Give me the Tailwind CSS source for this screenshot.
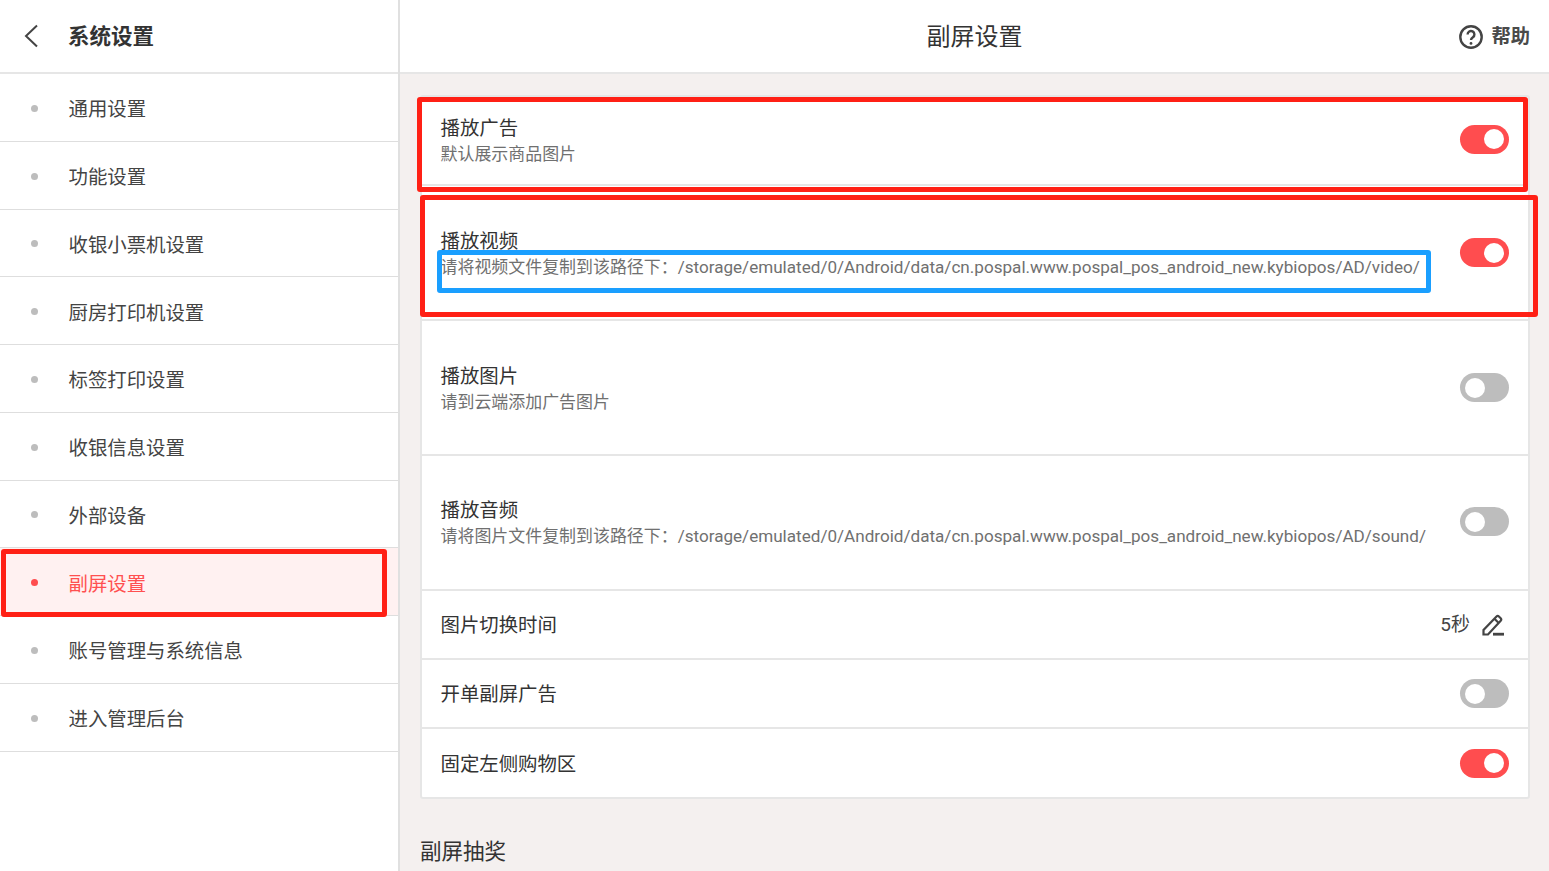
<!DOCTYPE html>
<html lang="zh">
<head>
<meta charset="UTF-8">
<title>副屏设置</title>
<script src="https://cdn.jsdelivr.net/npm/@tailwindcss/browser@4"></script>
</head>
<body class="relative h-[871px] w-[1549px] overflow-hidden bg-white font-['Roboto','Noto_Sans_CJK_SC',sans-serif] text-[#333]">
<div class="flex h-full">
  <!-- left menu -->
  <aside class="w-[400px] shrink-0 border-r-2 border-[#e0e0e0] bg-white">
    <div class="flex h-[74px] items-center border-b-2 border-[#e6e6e6] pl-[24px]">
      <svg class="h-[24px] w-[14px]" viewBox="0 0 14 24" fill="none" stroke="#444" stroke-width="2"><path d="M13 1.5 2 12l11 10.5"/></svg>
      <span class="ml-[30px] mt-[2px] text-[21.5px] font-bold text-[#333]">系统设置</span>
    </div>
    <ul class="text-[19.4px] text-[#444]">
      <li class="flex h-[67.75px] items-center border-b border-[#dedede] pl-[31px]"><span class="mt-[2px] h-[7px] w-[7px] rounded-full bg-[#bdbdbd]"></span><span class="ml-[30.5px] mt-[5px]">通用设置</span></li>
      <li class="flex h-[67.75px] items-center border-b border-[#dedede] pl-[31px]"><span class="mt-[2px] h-[7px] w-[7px] rounded-full bg-[#bdbdbd]"></span><span class="ml-[30.5px] mt-[5px]">功能设置</span></li>
      <li class="flex h-[67.75px] items-center border-b border-[#dedede] pl-[31px]"><span class="mt-[2px] h-[7px] w-[7px] rounded-full bg-[#bdbdbd]"></span><span class="ml-[30.5px] mt-[5px]">收银小票机设置</span></li>
      <li class="flex h-[67.75px] items-center border-b border-[#dedede] pl-[31px]"><span class="mt-[2px] h-[7px] w-[7px] rounded-full bg-[#bdbdbd]"></span><span class="ml-[30.5px] mt-[5px]">厨房打印机设置</span></li>
      <li class="flex h-[67.75px] items-center border-b border-[#dedede] pl-[31px]"><span class="mt-[2px] h-[7px] w-[7px] rounded-full bg-[#bdbdbd]"></span><span class="ml-[30.5px] mt-[5px]">标签打印设置</span></li>
      <li class="flex h-[67.75px] items-center border-b border-[#dedede] pl-[31px]"><span class="mt-[2px] h-[7px] w-[7px] rounded-full bg-[#bdbdbd]"></span><span class="ml-[30.5px] mt-[5px]">收银信息设置</span></li>
      <li class="flex h-[67.75px] items-center border-b border-[#dedede] pl-[31px]"><span class="mt-[2px] h-[7px] w-[7px] rounded-full bg-[#bdbdbd]"></span><span class="ml-[30.5px] mt-[5px]">外部设备</span></li>
      <li class="flex h-[67.75px] items-center border-b border-[#dedede] bg-[#fff1f1] pl-[31px] text-[#ff5050]"><span class="mt-[2px] h-[7px] w-[7px] rounded-full bg-[#ff4d4f]"></span><span class="ml-[30.5px] mt-[5px]">副屏设置</span></li>
      <li class="flex h-[67.75px] items-center border-b border-[#dedede] pl-[31px]"><span class="mt-[2px] h-[7px] w-[7px] rounded-full bg-[#bdbdbd]"></span><span class="ml-[30.5px] mt-[5px]">账号管理与系统信息</span></li>
      <li class="flex h-[67.75px] items-center border-b border-[#dedede] pl-[31px]"><span class="mt-[2px] h-[7px] w-[7px] rounded-full bg-[#bdbdbd]"></span><span class="ml-[30.5px] mt-[5px]">进入管理后台</span></li>
    </ul>
  </aside>

  <!-- right panel -->
  <main class="flex min-w-0 flex-1 flex-col bg-[#f4f0ef]">
    <header class="relative flex h-[74px] shrink-0 items-center justify-center border-b-2 border-[#e6e6e6] bg-white">
      <span class="mt-[2px] text-[24px] text-[#333]">副屏设置</span>
      <div class="absolute right-[19px] top-[23px] flex items-center gap-[8px]">
        <svg class="ml-[1px] h-[24px] w-[24px]" viewBox="0 0 24 24" fill="none" stroke="#444" stroke-width="2.4"><circle cx="12" cy="12" r="10.7"/><path d="M8.6 9.4a3.4 3.4 0 1 1 5.3 2.8c-1.2.8-1.9 1.4-1.9 2.9"/><circle cx="12" cy="18.4" r="1.4" fill="#444" stroke="none"/></svg>
        <span class="text-[19.3px] font-bold text-[#4a4a4a]">帮助</span>
      </div>
    </header>

    <div class="px-[20px] pt-[21px]">
      <div class="w-[1110px] rounded-[3px] border-2 border-[#e6e6e6] bg-white">
        <div class="flex h-[89px] items-center justify-between border-b-2 border-[#e6e6e6] pl-[18.5px] pr-[19px]">
          <div class="mt-[1px]">
            <div class="text-[19.4px] leading-[26px] text-[#333]">播放广告</div>
            <div class="text-[16.95px] leading-[24px] text-[#707070]">默认展示商品图片</div>
          </div>
          <span class="mb-[3px] flex h-[29px] w-[49px] items-center justify-end rounded-full bg-[#ff4d4f] pr-[5px]"><span class="h-[20px] w-[20px] rounded-full bg-white"></span></span>
        </div>
        <div class="flex h-[135px] items-center justify-between border-b-2 border-[#e6e6e6] pl-[18.5px] pr-[19px]">
          <div class="mt-[2px]">
            <div class="text-[19.4px] leading-[26px] text-[#333]">播放视频</div>
            <div class="text-[16.95px] leading-[24px] text-[#707070]">请将视频文件复制到该路径下：<span class="text-[17.1px]">/storage/emulated/0/Android/data/cn.pospal.www.pospal_pos_android_new.kybiopos/AD/video/</span></div>
          </div>
          <span class="flex h-[29px] w-[49px] items-center justify-end rounded-full bg-[#ff4d4f] pr-[5px]"><span class="h-[20px] w-[20px] rounded-full bg-white"></span></span>
        </div>
        <div class="flex h-[135px] items-center justify-between border-b-2 border-[#e6e6e6] pl-[18.5px] pr-[19px]">
          <div class="mt-[2px]">
            <div class="text-[19.4px] leading-[26px] text-[#333]">播放图片</div>
            <div class="text-[16.95px] leading-[24px] text-[#707070]">请到云端添加广告图片</div>
          </div>
          <span class="flex h-[29px] w-[49px] items-center rounded-full bg-[#bdbdbd] pl-[5px]"><span class="h-[20px] w-[20px] rounded-full bg-white"></span></span>
        </div>
        <div class="flex h-[135px] items-center justify-between border-b-2 border-[#e6e6e6] pl-[18.5px] pr-[19px]">
          <div>
            <div class="text-[19.4px] leading-[27px] text-[#333]">播放音频</div>
            <div class="text-[16.95px] leading-[24px] text-[#707070]">请将图片文件复制到该路径下：<span class="text-[17.1px]">/storage/emulated/0/Android/data/cn.pospal.www.pospal_pos_android_new.kybiopos/AD/sound/</span></div>
          </div>
          <span class="mb-[2px] flex h-[29px] w-[49px] items-center rounded-full bg-[#bdbdbd] pl-[5px]"><span class="h-[20px] w-[20px] rounded-full bg-white"></span></span>
        </div>
        <div class="flex h-[69px] items-center justify-between border-b-2 border-[#e6e6e6] pl-[18.5px] pr-[22px]">
          <span class="mt-[3px] text-[19.4px] text-[#333]">图片切换时间</span>
          <div class="flex items-center gap-[12px]">
            <span class="mt-[2px] text-[19px] text-[#444]">5秒</span>
            <svg class="h-[22px] w-[24px]" viewBox="0 0 24 22" fill="none" stroke="#444" stroke-width="2.2"><path d="M1.5 20.5V16L14.5 2.5q1.2-1.2 2.4 0l1.8 1.8q1.2 1.2 0 2.4L6 20.5z"/><path d="M12.5 4.8l4.2 4.2"/><path d="M11 20.2h11" stroke-width="2.8"/></svg>
          </div>
        </div>
        <div class="flex h-[69px] items-center justify-between border-b-2 border-[#e6e6e6] pl-[18.5px] pr-[19px]">
          <span class="mt-[3px] text-[19.4px] text-[#333]">开单副屏广告</span>
          <span class="flex h-[29px] w-[49px] items-center rounded-full bg-[#bdbdbd] pl-[5px]"><span class="h-[20px] w-[20px] rounded-full bg-white"></span></span>
        </div>
        <div class="flex h-[68px] items-center justify-between pl-[18.5px] pr-[19px]">
          <span class="mt-[3px] text-[19.4px] text-[#333]">固定左侧购物区</span>
          <span class="flex h-[29px] w-[49px] items-center justify-end rounded-full bg-[#ff4d4f] pr-[5px]"><span class="h-[20px] w-[20px] rounded-full bg-white"></span></span>
        </div>
      </div>
      <div class="mt-[37px] text-[21.5px] leading-[32px] text-[#333]">副屏抽奖</div>
    </div>
  </main>
</div>

<!-- annotation boxes drawn over the screenshot -->
<div class="absolute left-[417px] top-[97px] h-[95px] w-[1111px] rounded-[3px] border-[5px] border-[#ff2015]"></div>
<div class="absolute left-[420px] top-[195px] h-[122px] w-[1118px] rounded-[3px] border-[5px] border-[#ff2015]"></div>
<div class="absolute left-[1px] top-[549px] h-[68px] w-[386px] rounded-[3px] border-[5px] border-[#ff2015]"></div>
<div class="absolute left-[437px] top-[250px] h-[43px] w-[994px] rounded-[3px] border-[5px] border-[#1a9fff]"></div>
</body>
</html>
